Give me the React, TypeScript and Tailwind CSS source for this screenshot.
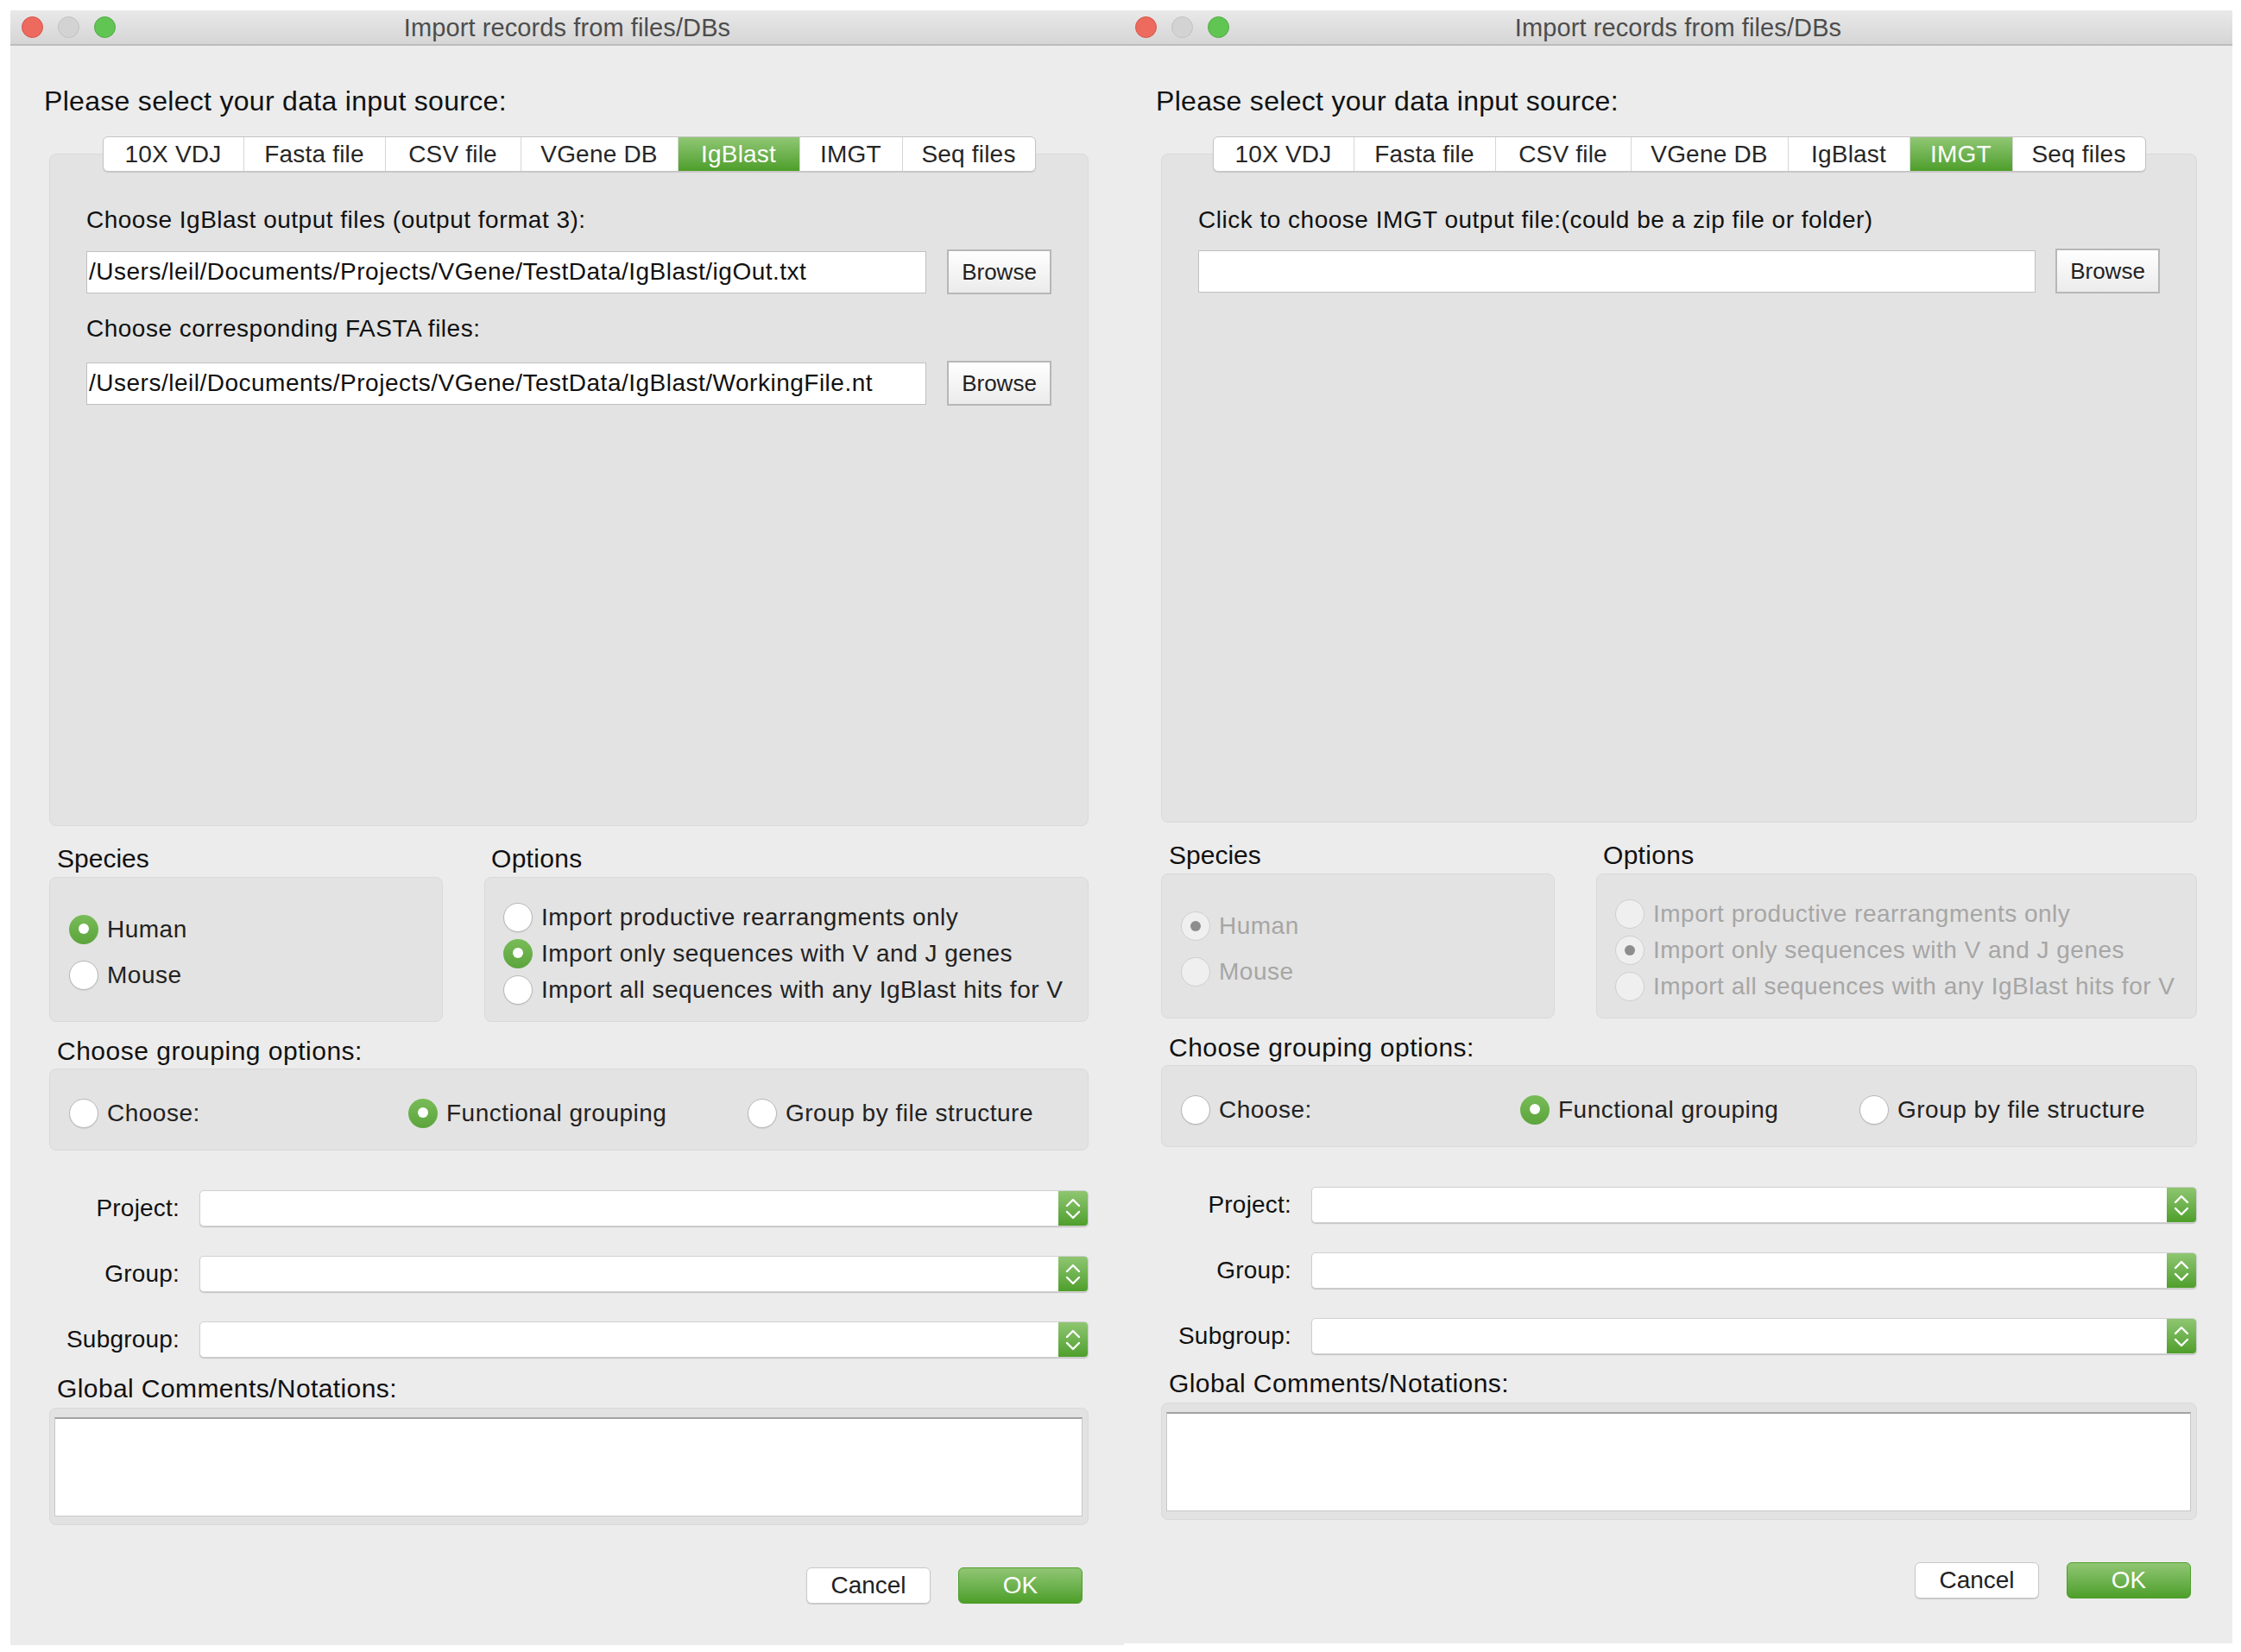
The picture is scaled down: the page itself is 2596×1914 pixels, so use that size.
import React from 'react';

type TabDef = { label: string; cls: string };
const TABS: TabDef[] = [
  { label: '10X VDJ', cls: 'w-[162px]' },
  { label: 'Fasta file', cls: 'w-[164px]' },
  { label: 'CSV file', cls: 'w-[157px]' },
  { label: 'VGene DB', cls: 'w-[182px]' },
  { label: 'IgBlast', cls: 'w-[141px]' },
  { label: 'IMGT', cls: 'w-[119px]' },
  { label: 'Seq files', cls: 'w-[154px]' },
];

function TitleBar() {
  return (
    <div className="h-[41px] shrink-0 grid grid-cols-[1fr_auto_1fr] items-center bg-linear-to-b from-[#e9e9e9] to-[#d5d5d5] border-b-2 border-[#bcbcbc]">
      <div className="flex items-center gap-[17px] pl-[13px]">
        <div className="w-[25px] h-[25px] rounded-full bg-[#ec6a5e] border border-[#d6564b]" />
        <div className="w-[25px] h-[25px] rounded-full bg-[#d3d3d3] border border-[#c2c2c2]" />
        <div className="w-[25px] h-[25px] rounded-full bg-[#61c554] border border-[#52aa44]" />
      </div>
      <div className="text-[29px] leading-[36px] text-[#4d4d4d] tracking-[0.1px]">Import records from files/DBs</div>
      <div />
    </div>
  );
}

function Radio({ checked, disabled }: { checked?: boolean; disabled?: boolean }) {
  if (disabled) {
    return (
      <div className="w-[34px] h-[34px] shrink-0 rounded-full bg-[#efefef] border border-[#cfcfcf] flex items-center justify-center">
        {checked && <div className="w-[12px] h-[12px] rounded-full bg-[#8d8d8d]" />}
      </div>
    );
  }
  if (checked) {
    return (
      <div className="w-[34px] h-[34px] shrink-0 rounded-full bg-linear-to-b from-[#78bc58] to-[#5ca43c] flex items-center justify-center">
        <div className="w-[12px] h-[12px] rounded-full bg-white -mt-[2px]" />
      </div>
    );
  }
  return (
    <div className="w-[34px] h-[34px] shrink-0 rounded-full bg-white border border-[#b7b7b7] shadow-[0_1px_1px_rgba(0,0,0,0.08)]" />
  );
}

function RadioRow({
  label,
  checked,
  disabled,
}: {
  label: string;
  checked?: boolean;
  disabled?: boolean;
}) {
  return (
    <div className="h-[34px] flex items-center gap-[10px]">
      <Radio checked={checked} disabled={disabled} />
      <span
        className={
          disabled
            ? 'text-[28px] leading-[34px] tracking-[0.5px] text-[#a6a6a6] whitespace-nowrap'
            : 'text-[28px] leading-[34px] tracking-[0.5px] text-[#222222] whitespace-nowrap'
        }
      >
        {label}
      </span>
    </div>
  );
}

function Chevrons() {
  return (
    <svg width="34" height="42" viewBox="0 0 34 42" fill="none">
      <polyline points="10,18 17,11 24,18" stroke="white" strokeWidth="2.4" strokeLinecap="round" strokeLinejoin="round" />
      <polyline points="10,25 17,32 24,25" stroke="white" strokeWidth="2.4" strokeLinecap="round" strokeLinejoin="round" />
    </svg>
  );
}

function Combo({ label }: { label: string }) {
  return (
    <div className="grid grid-cols-[151px_1fr] gap-x-[23px] items-center h-[42px]">
      <div className="text-right text-[28px] leading-[36px] tracking-[0.2px] text-[#111111] whitespace-nowrap">{label}</div>
      <div className="h-[42px] flex bg-white border border-[#d0d0d0] rounded-[5px] shadow-[0_1px_1px_rgba(0,0,0,0.18)] overflow-hidden">
        <div className="flex-1" />
        <div className="w-[34px] h-full bg-linear-to-b from-[#8fc671] to-[#4e9f2a] flex items-center justify-center">
          <Chevrons />
        </div>
      </div>
    </div>
  );
}

function FileRow({ value, rowCls }: { value: string; rowCls: string }) {
  return (
    <div className={rowCls}>
      <div className="flex-1 h-[49px] bg-white border border-[#c0c0c0] pl-[2px] text-[28px] leading-[46px] tracking-[0.5px] text-[#111111] whitespace-nowrap overflow-hidden">
        {value}
      </div>
      <div className="w-[121px] h-[52px] shrink-0 border-2 border-[#b7b7b7] bg-linear-to-b from-white to-[#ebebeb] flex items-center justify-center text-[26px] text-[#222222]">
        Browse
      </div>
    </div>
  );
}

function Window({ side }: { side: 'left' | 'right' }) {
  const left = side === 'left';
  const active = left ? 'IgBlast' : 'IMGT';
  const dis = !left;
  return (
    <div
      className={
        left
          ? 'w-[1290px] h-[1894px] shrink-0 bg-[#ececec] flex flex-col'
          : 'w-[1284px] h-[1892px] shrink-0 bg-[#ececec] flex flex-col'
      }
    >
      <TitleBar />
      <div className={left ? 'flex flex-col pl-[45px] pr-[41px]' : 'flex flex-col pl-[43px] pr-[41px]'}>
        <div className="mt-[44px] -ml-[6px] h-[40px] leading-[40px] text-[32px] tracking-[0.3px] text-[#111111]">
          Please select your data input source:
        </div>

        <div className="mt-[21px] relative z-10 flex justify-center">
          <div className="flex h-[41px] bg-white border border-[#c4c4c4] rounded-[6px] overflow-hidden shadow-[0_1px_1px_rgba(0,0,0,0.12)]">
            {TABS.map((t, i) => (
              <div
                key={t.label}
                className={[
                  t.cls,
                  'h-full flex items-center justify-center text-[28px] tracking-[0.2px] whitespace-nowrap',
                  i > 0 ? 'border-l border-[#d6d6d6]' : '',
                  t.label === active
                    ? 'bg-linear-to-b from-[#90c773] to-[#4d9e28] text-white'
                    : 'text-[#262626]',
                ].join(' ')}
              >
                {t.label}
              </div>
            ))}
          </div>
        </div>

        <div
          className={
            left
              ? '-mt-[21px] h-[779px] bg-[#e3e3e3] border border-[#d9d9d9] rounded-[8px] pt-[58px] px-[42px] flex flex-col'
              : '-mt-[21px] h-[775px] bg-[#e3e3e3] border border-[#d9d9d9] rounded-[8px] pt-[58px] px-[42px] flex flex-col'
          }
        >
          {left ? (
            <>
              <div className="h-[36px] leading-[36px] text-[28px] tracking-[0.5px] text-[#111111]">
                Choose IgBlast output files (output format 3):
              </div>
              <FileRow
                rowCls="mt-[16px] flex items-center gap-[24px]"
                value="/Users/leil/Documents/Projects/VGene/TestData/IgBlast/igOut.txt"
              />
              <div className="mt-[22px] h-[36px] leading-[36px] text-[28px] tracking-[0.5px] text-[#111111]">
                Choose corresponding FASTA files:
              </div>
              <FileRow
                rowCls="mt-[19px] flex items-center gap-[24px]"
                value="/Users/leil/Documents/Projects/VGene/TestData/IgBlast/WorkingFile.nt"
              />
            </>
          ) : (
            <>
              <div className="h-[36px] leading-[36px] text-[28px] tracking-[0.5px] text-[#111111]">
                Click to choose IMGT output file:(could be a zip file or folder)
              </div>
              <FileRow rowCls="mt-[15px] flex items-center gap-[23px]" value="" />
            </>
          )}
        </div>

        <div className="mt-[20px] flex gap-[48px]">
          <div className="w-[456px] shrink-0 flex flex-col">
            <div className="pl-[9px] h-[36px] leading-[36px] text-[30px] text-[#111111]">Species</div>
            <div className="mt-[3px] h-[168px] bg-[#e3e3e3] border border-[#d9d9d9] rounded-[8px] pt-[43px] pl-[22px] flex flex-col gap-[19px]">
              <RadioRow label="Human" checked disabled={dis} />
              <RadioRow label="Mouse" disabled={dis} />
            </div>
          </div>
          <div className="flex-1 flex flex-col">
            <div className="pl-[8px] h-[36px] leading-[36px] text-[30px] tracking-[0.3px] text-[#111111]">Options</div>
            <div className="mt-[3px] h-[168px] bg-[#e3e3e3] border border-[#d9d9d9] rounded-[8px] pt-[29px] pl-[21px] flex flex-col gap-[8px]">
              <RadioRow label="Import productive rearrangments only" disabled={dis} />
              <RadioRow label="Import only sequences with V and J genes" checked disabled={dis} />
              <RadioRow label="Import all sequences with any IgBlast hits for V" disabled={dis} />
            </div>
          </div>
        </div>

        <div className="mt-[16px] pl-[9px] h-[36px] leading-[36px] text-[30px] tracking-[0.5px] text-[#111111]">
          Choose grouping options:
        </div>
        <div className="mt-[2px] h-[95px] bg-[#e3e3e3] border border-[#d9d9d9] rounded-[8px] pt-[34px] pl-[22px] grid grid-cols-[393px_393px_1fr]">
          <RadioRow label="Choose:" />
          <RadioRow label="Functional grouping" checked />
          <RadioRow label="Group by file structure" />
        </div>

        <div className="mt-[46px] flex flex-col gap-[34px]">
          <Combo label="Project:" />
          <Combo label="Group:" />
          <Combo label="Subgroup:" />
        </div>

        <div
          className={
            left
              ? 'mt-[18px] pl-[9px] h-[36px] leading-[36px] text-[30px] tracking-[0.4px] text-[#111111]'
              : 'mt-[16px] pl-[9px] h-[36px] leading-[36px] text-[30px] tracking-[0.4px] text-[#111111]'
          }
        >
          Global Comments/Notations:
        </div>
        <div className="mt-[4px] h-[136px] bg-[#e2e2e2] border border-[#d9d9d9] rounded-[8px] pt-[10px] pb-[9px] pl-[5px] pr-[6px]">
          <div className="h-full bg-white border border-[#c8c8c8] border-t-2 border-t-[#a3a3a3]" />
        </div>

        <div className="mt-[49px] flex justify-end gap-[32px] pr-[7px]">
          <div className="w-[144px] h-[42px] rounded-[6px] bg-white border border-[#c8c8c8] shadow-[0_1px_1px_rgba(0,0,0,0.15)] flex items-center justify-center text-[28px] text-[#222222]">
            Cancel
          </div>
          <div className="w-[144px] h-[42px] rounded-[6px] bg-linear-to-b from-[#90c673] to-[#4c9f27] border border-[#4f9d2c] flex items-center justify-center text-[28px] text-white">
            OK
          </div>
        </div>
      </div>
    </div>
  );
}

export default function App() {
  return (
    <div className="w-[2596px] h-[1914px] overflow-hidden bg-white pt-[12px] pl-[12px] flex items-start font-['Liberation_Sans',Arial,sans-serif]">
      <Window side="left" />
      <Window side="right" />
    </div>
  );
}
